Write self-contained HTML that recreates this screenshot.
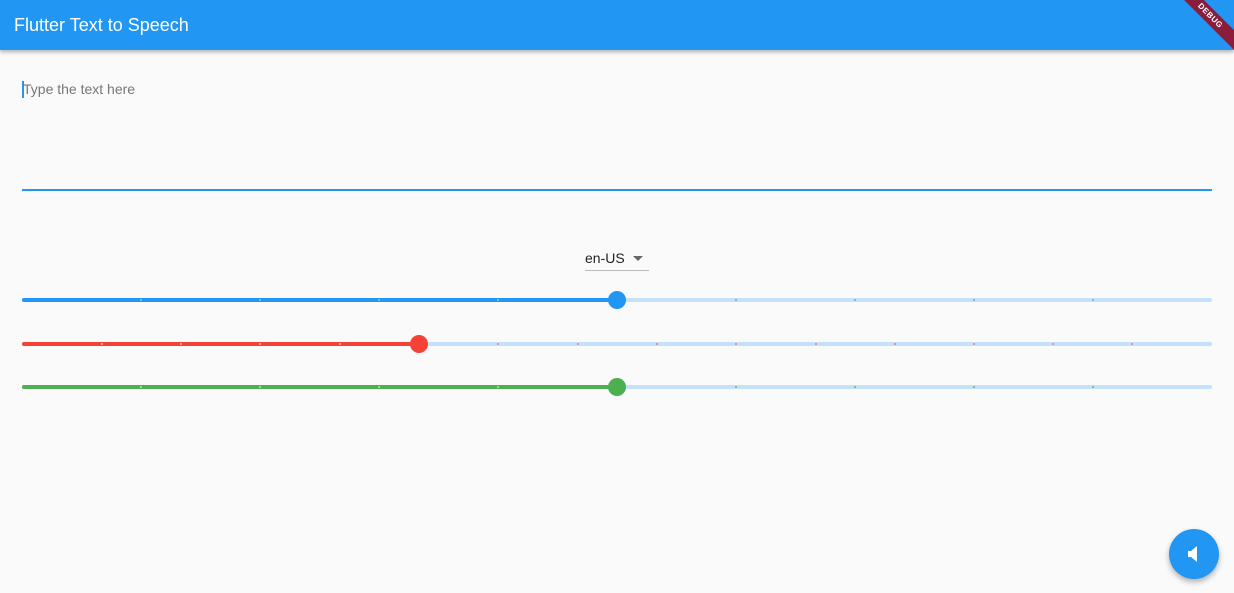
<!DOCTYPE html>
<html><head><style>
body{margin:0;width:1234px;height:593px;background:#fafafa;font-family:"Liberation Sans",sans-serif;position:relative;overflow:hidden}
.bar{position:absolute;left:0;top:0;width:1234px;height:50px;background:#2196f3;box-shadow:0 2px 4px rgba(0,0,0,.3)}
.title{position:absolute;left:14px;top:15px;color:#fff;font-size:18px}
.ribbon{position:absolute;right:-26px;top:9px;width:100px;height:14px;background:#8b1c3c;color:#fff;font-size:8px;font-weight:bold;text-align:center;line-height:14px;transform:rotate(45deg);letter-spacing:.5px}
.ph{position:absolute;left:23px;top:81px;color:#777;font-size:14px}
.cur{position:absolute;left:22px;top:81px;width:2px;height:17px;background:#2196f3}
.line{position:absolute;left:22px;top:189px;width:1190px;height:2px;background:#2196f3}
.dd{position:absolute;left:585px;top:250px;font-size:14px;color:#222}
.ddl{position:absolute;left:585px;top:270px;width:64px;height:1px;background:#bbb}
.arr{position:absolute;left:633px;top:256px;width:0;height:0;border-left:5px solid transparent;border-right:5px solid transparent;border-top:5px solid #666}
.tr{position:absolute;height:4px;border-radius:2px}
.th{position:absolute;width:18px;height:18px;border-radius:50%}
.tk{position:absolute;width:2px;height:2px;border-radius:1px}
.fab{position:absolute;left:1169px;top:529px;width:50px;height:50px;border-radius:50%;background:#2196f3;box-shadow:0 3px 6px rgba(0,0,0,.3)}
</style></head><body>
<div class="bar"><div class="title">Flutter Text to Speech</div></div>
<div class="ribbon">DEBUG</div>
<div class="cur"></div><div class="ph">Type the text here</div>
<div class="line"></div>
<div class="dd">en-US</div><div class="arr"></div><div class="ddl"></div>

<div class="tr" style="left:22px;top:298px;width:1190px;background:#c5e1f9"></div>
<div class="tr" style="left:22px;top:298px;width:595px;background:#2196f3"></div>
<div class="th" style="left:608px;top:291px;background:#2196f3"></div>

<div class="tr" style="left:22px;top:342px;width:1190px;background:#c5e1f9"></div>
<div class="tr" style="left:22px;top:342px;width:397px;background:#f44336"></div>
<div class="th" style="left:410px;top:335px;background:#f44336"></div>

<div class="tr" style="left:22px;top:385px;width:1190px;background:#c5e1f9"></div>
<div class="tr" style="left:22px;top:385px;width:595px;background:#4caf50"></div>
<div class="th" style="left:608px;top:378px;background:#4caf50"></div>

<div class="tk" style="left:140px;top:299px;background:#9cd"></div>
<div class="tk" style="left:259px;top:299px;background:#9cd"></div>
<div class="tk" style="left:378px;top:299px;background:#9cd"></div>
<div class="tk" style="left:497px;top:299px;background:#9cd"></div>
<div class="tk" style="left:735px;top:299px;background:#7ab"></div>
<div class="tk" style="left:854px;top:299px;background:#7ab"></div>
<div class="tk" style="left:973px;top:299px;background:#7ab"></div>
<div class="tk" style="left:1092px;top:299px;background:#7ab"></div>

<div class="tk" style="left:101px;top:343px;background:#fbb"></div>
<div class="tk" style="left:180px;top:343px;background:#fbb"></div>
<div class="tk" style="left:259px;top:343px;background:#fbb"></div>
<div class="tk" style="left:339px;top:343px;background:#fbb"></div>
<div class="tk" style="left:497px;top:343px;background:#e77"></div>
<div class="tk" style="left:577px;top:343px;background:#e77"></div>
<div class="tk" style="left:656px;top:343px;background:#e77"></div>
<div class="tk" style="left:735px;top:343px;background:#e77"></div>
<div class="tk" style="left:815px;top:343px;background:#e77"></div>
<div class="tk" style="left:894px;top:343px;background:#e77"></div>
<div class="tk" style="left:973px;top:343px;background:#e77"></div>
<div class="tk" style="left:1052px;top:343px;background:#e77"></div>
<div class="tk" style="left:1131px;top:343px;background:#e77"></div>

<div class="tk" style="left:140px;top:386px;background:#aea"></div>
<div class="tk" style="left:259px;top:386px;background:#aea"></div>
<div class="tk" style="left:378px;top:386px;background:#aea"></div>
<div class="tk" style="left:497px;top:386px;background:#aea"></div>
<div class="tk" style="left:735px;top:386px;background:#7a7"></div>
<div class="tk" style="left:854px;top:386px;background:#7a7"></div>
<div class="tk" style="left:973px;top:386px;background:#7a7"></div>
<div class="tk" style="left:1092px;top:386px;background:#7a7"></div>

<div class="fab"><svg width="50" height="50" viewBox="0 0 50 50"><path d="M19 22h3l6-5v16l-6-5h-3z" fill="#fff"/></svg></div>
</body></html>
